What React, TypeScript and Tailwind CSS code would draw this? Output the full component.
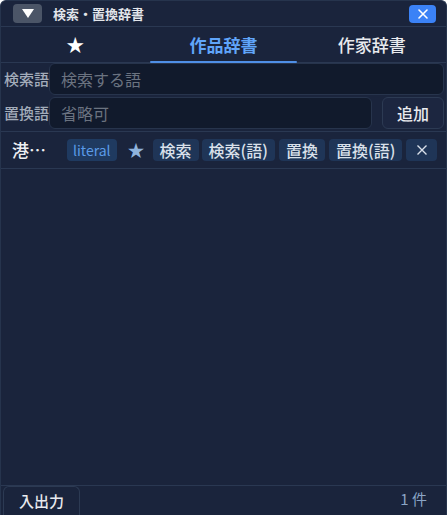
import React from "react";

const font = { fontFamily: '"Noto Sans CJK JP", "Noto Sans", sans-serif' };

function Chip({ children, className = "" }: { children: React.ReactNode; className?: string }) {
  return (
    <span
      className={
        "flex h-[22px] items-center rounded-[4px] bg-[#1f3557] px-[7px] text-[16px] font-medium leading-none text-[#d9e0ea] " +
        className
      }
    >
      {children}
    </span>
  );
}

export default function App() {
  return (
    <div
      style={font}
      className="flex h-[515px] w-[447px] flex-col overflow-hidden rounded-t-[6px] border border-b-0 border-[#26344d] bg-[#1a243c] text-[#e5e7eb]"
    >
      {/* title bar */}
      <div className="flex h-[26px] shrink-0 items-center border-b border-[#2a3852] pl-[12px] pr-[10px]">
        <button className="flex h-[19px] w-[29px] items-center justify-center rounded-[4px] bg-[#4b5567]">
          <svg width="14" height="11" viewBox="0 0 14 11">
            <path d="M1 1h12L7 10z" fill="#ffffff" />
          </svg>
        </button>
        <span className="ml-[11px] text-[13px] font-bold text-[#e2e5ea]">検索・置換辞書</span>
        <button className="ml-auto flex h-[18px] w-[27px] items-center justify-center rounded-[4px] bg-[#3b82f6]">
          <svg width="12" height="12" viewBox="0 0 12 12">
            <path d="M2 2l8 8M10 2l-8 8" stroke="#ffffff" strokeWidth="1.6" strokeLinecap="round" />
          </svg>
        </button>
      </div>

      {/* tabs */}
      <div className="grid h-[36px] shrink-0 grid-cols-3 border-b border-[#2a3852]">
        <div className="flex items-center justify-center text-[18px] text-white">★</div>
        <div className="relative flex items-center justify-center text-[17px] font-bold text-[#60a5fa]">
          作品辞書
          <span className="absolute bottom-[-1px] left-[1px] right-[1px] h-[2px] rounded-full bg-[#4f8fe6]" />
        </div>
        <div className="flex items-center justify-center text-[17px] font-medium text-[#e8eaee]">作家辞書</div>
      </div>

      {/* form */}
      <div className="flex shrink-0 flex-col gap-[2px] border-b border-[#2a3852] pb-[2px] pr-[2px]">
        <div className="flex items-center">
          <span className="w-[48px] pl-[3px] text-[15px] font-medium text-[#a3acba]">検索語</span>
          <div className="flex h-[32px] flex-1 items-center rounded-[6px] border border-[#27344c] bg-[#111a2c] pl-[11px] text-[16px] text-[#6b7380]">
            検索する語
          </div>
        </div>
        <div className="flex items-center">
          <span className="w-[48px] pl-[3px] text-[15px] font-medium text-[#a3acba]">置換語</span>
          <div className="flex h-[32px] flex-1 items-center rounded-[6px] border border-[#27344c] bg-[#111a2c] pl-[11px] text-[16px] text-[#6b7380]">
            省略可
          </div>
          <button className="ml-[10px] flex h-[32px] w-[62px] items-center justify-center rounded-[6px] border border-[#2c3a53] bg-[#1c2640] text-[16px] font-medium text-[#e8eaee]">
            追加
          </button>
        </div>
      </div>

      {/* entry */}
      <div className="flex h-[37px] shrink-0 items-center border-b border-[#2a3852] pl-[11px]">
        <span className="w-[55px] text-[17px] font-medium text-[#eef0f3]">港…</span>
        <span className="flex h-[22px] items-center rounded-[4px] bg-[#1f3a60] px-[6px] text-[14px] leading-none text-[#5b9be8]">
          literal
        </span>
        <span className="ml-[11px] text-[17px] text-[#8fb3dc]">★</span>
        <div className="ml-[8px] flex gap-[4px]">
          <Chip className="mr-[-1px]">検索</Chip>
          <Chip>検索(語)</Chip>
          <Chip>置換</Chip>
          <Chip>置換(語)</Chip>
          <Chip className="w-[31px] justify-center px-0">
            <svg width="12" height="12" viewBox="0 0 12 12">
              <path d="M1.5 1.5l9 9M10.5 1.5l-9 9" stroke="#d9e0ea" strokeWidth="1.4" />
            </svg>
          </Chip>
        </div>
      </div>

      <div className="flex-1" />

      {/* footer */}
      <div className="flex h-[30px] shrink-0 items-end border-t border-[#2a3852]">
        <button className="ml-[2px] flex h-[29px] w-[77px] items-center justify-center rounded-t-[6px] border border-b-0 border-[#2c3a53] text-[15px] font-medium text-[#e8eaee]">
          入出力
        </button>
        <span className="mb-[5px] ml-auto mr-[19px] text-[15px] text-[#8ba5c6]">1 件</span>
      </div>
    </div>
  );
}
